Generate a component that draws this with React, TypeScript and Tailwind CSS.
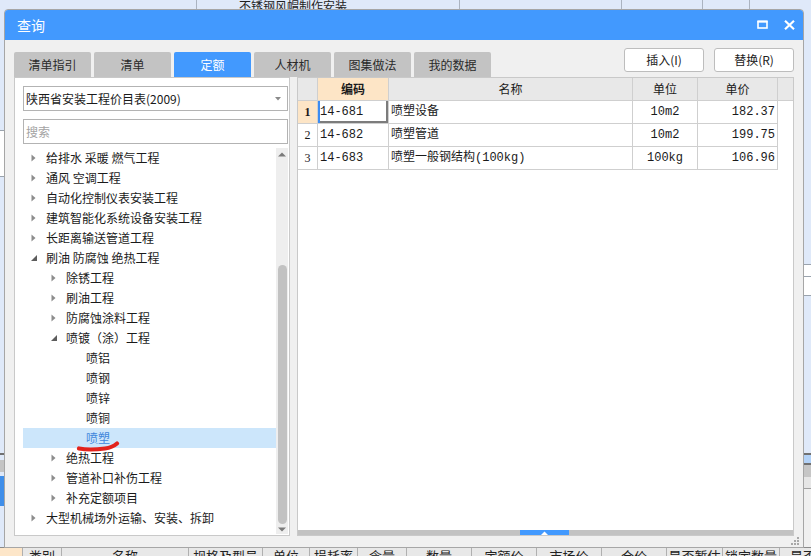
import React from "react";

type Node = { l: number; t: string; s?: "c" | "e"; sel?: boolean };

const tree: Node[] = [
  { l: 0, t: "给排水 采暖 燃气工程", s: "c" },
  { l: 0, t: "通风 空调工程", s: "c" },
  { l: 0, t: "自动化控制仪表安装工程", s: "c" },
  { l: 0, t: "建筑智能化系统设备安装工程", s: "c" },
  { l: 0, t: "长距离输送管道工程", s: "c" },
  { l: 0, t: "刷油 防腐蚀 绝热工程", s: "e" },
  { l: 1, t: "除锈工程", s: "c" },
  { l: 1, t: "刷油工程", s: "c" },
  { l: 1, t: "防腐蚀涂料工程", s: "c" },
  { l: 1, t: "喷镀（涂）工程", s: "e" },
  { l: 2, t: "喷铝" },
  { l: 2, t: "喷钢" },
  { l: 2, t: "喷锌" },
  { l: 2, t: "喷铜" },
  { l: 2, t: "喷塑", sel: true },
  { l: 1, t: "绝热工程", s: "c" },
  { l: 1, t: "管道补口补伤工程", s: "c" },
  { l: 1, t: "补充定额项目", s: "c" },
  { l: 0, t: "大型机械场外运输、安装、拆卸", s: "c" },
];

const pads = ["pl-[8px]", "pl-[28px]", "pl-[48px]"];

const rows = [
  { n: "1", code: "14-681", name: "喷塑设备", unit: "10m2", price: "182.37" },
  { n: "2", code: "14-682", name: "喷塑管道", unit: "10m2", price: "199.75" },
  { n: "3", code: "14-683", name: "喷塑一般钢结构(100kg)", unit: "100kg", price: "106.96" },
];

const tabs = ["清单指引", "清单", "定额", "人材机", "图集做法", "我的数据"];

function Collapsed() {
  return (
    <svg width="5" height="8" viewBox="0 0 5 8">
      <path d="M0.5 0.5 L4.5 4 L0.5 7.5Z" fill="#8c8c8c" />
    </svg>
  );
}
function Expanded() {
  return (
    <svg width="6" height="6" viewBox="0 0 6 6">
      <path d="M6 0 L6 6 L0 6Z" fill="#5c5c5c" />
    </svg>
  );
}

const bottomCols: { w: string; t: string }[] = [
  { w: "w-[39px]", t: "类别" },
  { w: "w-[127px]", t: "名称" },
  { w: "w-[74px]", t: "规格及型号" },
  { w: "w-[47px]", t: "单位" },
  { w: "w-[48px]", t: "损耗率" },
  { w: "w-[49px]", t: "含量" },
  { w: "w-[65px]", t: "数量" },
  { w: "w-[65px]", t: "定额价" },
  { w: "w-[65px]", t: "市场价" },
  { w: "w-[65px]", t: "合价" },
  { w: "w-[56px]", t: "是否暂估" },
  { w: "w-[57px]", t: "锁定数量" },
  { w: "w-[60px]", t: "是否暂" },
];

export default function App() {
  return (
    <div className="relative w-[811px] h-[556px] overflow-hidden bg-[#dfe9f9] font-['Noto_Sans_CJK_SC',sans-serif] flex flex-col">
      {/* background: top row */}
      <div className="flex-none h-[12px] flex text-[12px] leading-[12px] text-[#222]">
        <div className="w-[197px] flex-none border-r border-[#aab3c0]" />
        <div className="w-[263px] flex-none border-r border-[#aab3c0] pl-[42px] whitespace-nowrap">不锈钢风帽制作安装</div>
        <div className="w-[162px] flex-none border-r border-[#aab3c0]" />
        <div className="w-[81px] flex-none border-r border-[#aab3c0]" />
        <div className="w-[47px] flex-none border-r border-[#aab3c0]" />
      </div>
      {/* background: middle */}
      <div className="flex-none h-[535px] flex">
        <div className="w-[4px] flex-none flex flex-col">
          <div className="h-[118px]" />
          <div className="h-[47px] bg-white border-y border-[#9aa3ad]" />
          <div className="h-[276px]" />
          <div className="h-[2px] bg-[#707070]" />
          <div className="h-[5px]" />
          <div className="h-[12px] bg-[#c4c4c4]" />
          <div className="h-[4px]" />
          <div className="h-[30px] bg-[#3f8ee9]" />
        </div>
        <div className="flex-1" />
        <div className="w-[7px] flex-none flex flex-col">
          <div className="h-[252px]" />
          <div className="h-[13px] bg-white border-y border-[#9aa3ad]" />
          <div className="h-[19px] bg-white border-b border-[#9aa3ad]" />
          <div className="h-[157px]" />
          <div className="h-[2px] bg-[#707070]" />
          <div className="h-[8px] bg-[#b3d2f7]" />
          <div className="h-[2px] bg-[#707070]" />
          <div className="h-[12px] bg-[#c6c6c6]" />
          <div className="h-[12px] bg-[#e6e6e6] border-b border-[#a0a0a0]" />
          <div className="flex-1 bg-[#f0f0f0]" />
        </div>
      </div>
      {/* background: bottom header row */}
      <div className="flex-none h-[22px] flex bg-[#e8e8e8] border-t border-[#8a8a8a] text-[13px] leading-[14px] text-[#222]">
        <div className="w-[23px] flex-none bg-[#fde6c9] border-r border-[#b0b0b0]" />
        {bottomCols.map((c, i) => (
          <div key={i} className={`${c.w} flex-none border-r border-[#b0b0b0] text-center pt-[1px] whitespace-nowrap overflow-hidden`}>
            {c.t}
          </div>
        ))}
      </div>

      {/* dialog window */}
      <div className="absolute left-[4px] top-[9px] w-[800px] h-[539px] flex flex-col rounded-t-[4px] overflow-hidden border border-[#a6a6a6] bg-[#f0f0f0]">
        <div className="h-[31px] flex-none bg-[#4299fe] flex items-center justify-between pl-[13px] pr-[9px] -mx-[1px] -mt-[1px]">
          <span className="text-white text-[14px] leading-[16px]">查询</span>
          <div className="flex items-center gap-[16px]">
            <svg width="11" height="9" viewBox="0 0 11 9">
              <rect x="1" y="1.5" width="9" height="6.5" fill="none" stroke="#fff" strokeWidth="1.6" />
              <rect x="0.5" y="0.5" width="10" height="2" fill="#fff" />
            </svg>
            <svg width="11" height="10" viewBox="0 0 11 10">
              <path d="M1 0.8 L10 9.2 M10 0.8 L1 9.2" stroke="#fff" strokeWidth="2.2" />
            </svg>
          </div>
        </div>
        <div className="flex-1 flex flex-col px-[9px] pt-[8px]">
          <div className="flex-none h-[29px] flex justify-between">
            <div className="self-end flex gap-[3px]">
              {tabs.map((t) => (
                <div
                  key={t}
                  className={`w-[77px] h-[25px] rounded-t-[2px] flex items-center justify-center text-[12px] leading-[14px] ${
                    t === "定额" ? "bg-[#4299fe] text-white" : "bg-[#c3c3c3] text-[#2a2a2a]"
                  }`}
                >
                  {t}
                </div>
              ))}
            </div>
            <div className="self-start flex gap-[10px]">
              <div className="w-[80px] h-[24px] bg-white border border-[#bdbdbd] rounded-[3px] flex items-center justify-center text-[12px] leading-[14px] text-[#222]">
                插入(I)
              </div>
              <div className="w-[80px] h-[24px] bg-white border border-[#bdbdbd] rounded-[3px] flex items-center justify-center text-[12px] leading-[14px] text-[#222]">
                替换(R)
              </div>
            </div>
          </div>
          <div className="flex-none h-[459px] flex gap-[7px]">
            {/* left panel */}
            <div className="w-[276px] flex-none bg-white border border-[#c9c9c9] flex flex-col pl-[8px] pr-[1px] pt-[8px] pb-[1px]">
              <div className="h-[25px] flex-none border border-[#b3b3b3] flex items-center justify-between pl-[2px] pr-[6px] text-[12px] leading-[14px] text-[#1a1a1a]">
                <span>陕西省安装工程价目表(2009)</span>
                <svg width="6" height="4" viewBox="0 0 6 4">
                  <path d="M0 0 L6 0 L3 3.5Z" fill="#8a8a8a" />
                </svg>
              </div>
              <div className="h-[25px] flex-none mt-[8px] border border-[#b3b3b3] flex items-center pl-[2px] text-[12px] leading-[14px] text-[#a3a3a3]">
                搜索
              </div>
              <div className="flex-1 mt-[4px] flex relative">
                <div className="flex-1 flex flex-col">
                  {tree.map((n, i) => (
                    <div
                      key={i}
                      className={`h-[20px] flex-none flex items-center ${pads[n.l]} ${n.sel ? "bg-[#cce6fb]" : ""}`}
                    >
                      <span className="w-[15px] flex-none flex items-center">
                        {n.s === "c" ? <Collapsed /> : n.s === "e" ? <Expanded /> : null}
                      </span>
                      <span className={`text-[12px] leading-[14px] whitespace-nowrap ${n.sel ? "text-[#3f86dc]" : "text-[#1a1a1a]"}`}>
                        {n.t}
                      </span>
                    </div>
                  ))}
                </div>
                <div className="w-[12px] flex-none bg-[#eeeeee] flex flex-col items-center">
                  <div className="h-[12px] flex-none flex items-center justify-center">
                    <svg width="8" height="5" viewBox="0 0 8 5">
                      <path d="M0 4.5 L4 0.5 L8 4.5Z" fill="#7a7a7a" />
                    </svg>
                  </div>
                  <div className="h-[105px] flex-none" />
                  <div className="w-[9px] h-[259px] flex-none rounded-full bg-[#c2c2c2]" />
                  <div className="flex-1 flex items-center justify-center">
                    <svg width="8" height="5" viewBox="0 0 8 5">
                      <path d="M0 0.5 L4 4.5 L8 0.5Z" fill="#7a7a7a" />
                    </svg>
                  </div>
                </div>
                <svg className="absolute left-[53px] top-[292px]" width="44" height="12" viewBox="0 0 44 12">
                  <path d="M3 8.5 C11 10, 21 9.5, 29 8.5 C34 7.8, 38 6, 41 3.5" fill="none" stroke="#e3231c" strokeWidth="4.2" strokeLinecap="round" />
                </svg>
              </div>
            </div>
            {/* right panel */}
            <div className="flex-1 bg-white border border-[#c9c9c9] flex flex-col">
              <div className="flex-none flex flex-col text-[12px] leading-[14px] text-[#1a1a1a]">
                <div className="h-[23px] flex bg-[#e8e8e8] border-b border-[#cfcfcf]">
                  <div className="w-[20px] border-r border-[#cfcfcf]" />
                  <div className="w-[71px] border-r border-[#cfcfcf] bg-[#fde5c6] flex items-center justify-center font-bold">编码</div>
                  <div className="w-[244px] border-r border-[#cfcfcf] flex items-center justify-center">名称</div>
                  <div className="w-[65px] border-r border-[#cfcfcf] flex items-center justify-center">单位</div>
                  <div className="w-[80px] border-r border-[#cfcfcf] flex items-center justify-center">单价</div>
                </div>
                {rows.map((r, i) => (
                  <div key={r.n} className="h-[23px] flex">
                    <div
                      className={`w-[20px] border-r border-b border-[#cfcfcf] flex items-center justify-center font-['Liberation_Serif',serif] ${
                        i === 0 ? "bg-[#fde5c6] font-bold" : ""
                      }`}
                    >
                      {r.n}
                    </div>
                    <div
                      className={`w-[71px] border-r border-b border-[#cfcfcf] flex items-center pl-[2px] font-['Liberation_Mono',monospace] ${
                        i === 0 ? "shadow-[inset_2px_0_0_#3c8cf2,inset_-2px_-2px_0_#7c7c7c]" : ""
                      }`}
                    >
                      {r.code}
                    </div>
                    <div className="w-[244px] border-r border-b border-[#cfcfcf] flex items-center pl-[2px] font-['Liberation_Mono','Noto_Sans_CJK_SC',monospace] whitespace-nowrap">
                      {r.name}
                    </div>
                    <div className="w-[65px] border-r border-b border-[#cfcfcf] flex items-center justify-center font-['Liberation_Mono',monospace]">
                      {r.unit}
                    </div>
                    <div className="w-[80px] border-r border-b border-[#cfcfcf] flex items-center justify-end pr-[2px] font-['Liberation_Mono',monospace]">
                      {r.price}
                    </div>
                  </div>
                ))}
              </div>
              <div className="flex-1" />
              <div className="h-[5px] flex-none bg-[#c2c2c2] flex">
                <div className="w-[222px] flex-none" />
                <div className="w-[49px] flex-none bg-[#4299fe] flex items-center justify-center">
                  <svg width="7" height="4" viewBox="0 0 7 4">
                    <path d="M0 4 L3.5 0.5 L7 4Z" fill="#fff" />
                  </svg>
                </div>
              </div>
            </div>
          </div>
          <div className="flex-1 flex justify-end items-end pb-[2px] -mr-[5px]">
            <svg width="8" height="8" viewBox="0 0 8 8">
              <rect x="6" y="0" width="2" height="2" fill="#a8a8a8" />
              <rect x="3" y="3" width="2" height="2" fill="#a8a8a8" />
              <rect x="6" y="3" width="2" height="2" fill="#a8a8a8" />
              <rect x="0" y="6" width="2" height="2" fill="#a8a8a8" />
              <rect x="3" y="6" width="2" height="2" fill="#a8a8a8" />
              <rect x="6" y="6" width="2" height="2" fill="#a8a8a8" />
            </svg>
          </div>
        </div>
      </div>
    </div>
  );
}
